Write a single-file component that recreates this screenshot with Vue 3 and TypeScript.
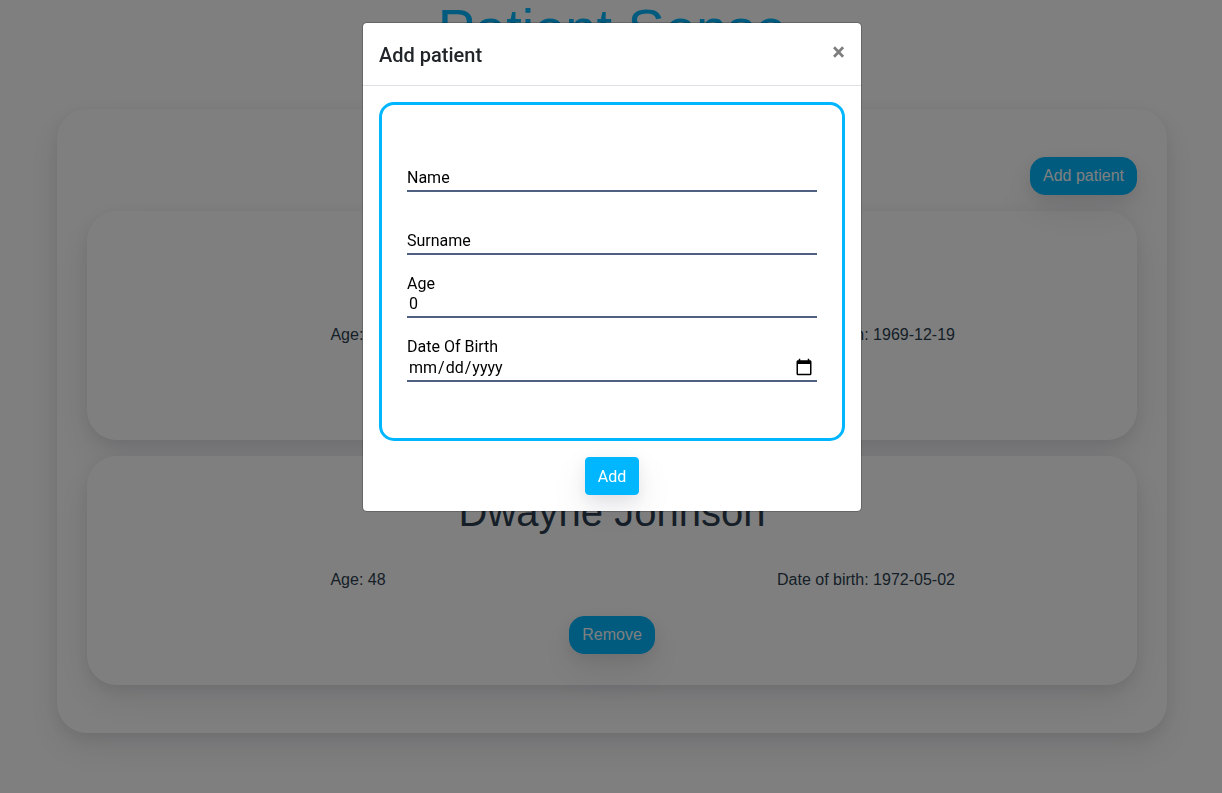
<script setup lang="ts">
import { ref } from 'vue'

interface Patient {
  id: number
  name: string
  age: number
  birth: string
}

const patients = ref<Patient[]>([
  { id: 1, name: 'Richard Hammond', age: 50, birth: '1969-12-19' },
  { id: 2, name: 'Dwayne Johnson', age: 48, birth: '1972-05-02' },
])

const open = ref(true)
const name = ref('')
const surname = ref('')
const age = ref(0)
const birth = ref('')

function remove(id: number) {
  patients.value = patients.value.filter((p) => p.id !== id)
}

function add() {
  patients.value.push({
    id: Date.now(),
    name: `${name.value} ${surname.value}`,
    age: age.value,
    birth: birth.value,
  })
  open.value = false
}
</script>

<template>
  <div class="page">
    <h1 class="brand">Patient Sense</h1>
    <main class="panel">
      <div class="toolbar">
        <button type="button" class="btn pill" @click="open = true">Add patient</button>
      </div>
      <article v-for="p in patients" :key="p.id" class="card">
        <h2 class="card-name">{{ p.name }}</h2>
        <div class="facts">
          <span>Age: {{ p.age }}</span>
          <span>Date of birth: {{ p.birth }}</span>
        </div>
        <button type="button" class="btn pill" @click="remove(p.id)">Remove</button>
      </article>
    </main>
  </div>

  <div v-if="open" class="backdrop">
    <div class="modal" role="dialog" aria-modal="true" aria-labelledby="modal-title">
      <header class="modal-header">
        <h5 id="modal-title" class="modal-title">Add patient</h5>
        <button type="button" class="close" aria-label="Close" @click="open = false">×</button>
      </header>
      <form class="modal-body" @submit.prevent="add">
        <div class="fields">
          <div class="field floating">
            <label for="name">Name</label>
            <input id="name" v-model="name" type="text" />
          </div>
          <div class="field floating">
            <label for="surname">Surname</label>
            <input id="surname" v-model="surname" type="text" />
          </div>
          <div class="field">
            <label for="age">Age</label>
            <input id="age" v-model.number="age" type="number" />
          </div>
          <div class="field">
            <label for="birth">Date Of Birth</label>
            <input id="birth" v-model="birth" class="date" type="date" />
          </div>
        </div>
        <button type="submit" class="btn submit">Add</button>
      </form>
    </div>
  </div>
</template>

<style>
body {
  margin: 0;
  background: #fff;
  overflow: hidden;
}
</style>

<style scoped>
* {
  box-sizing: border-box;
}

.page {
  padding: 0 55px 60px 57px;
  font-family: "Liberation Sans", Arial, sans-serif;
  font-size: 16px;
  line-height: 24px;
  color: #2c3e50;
  text-align: center;
}

.brand {
  margin: 0 0 52px;
  font-size: 56px;
  font-weight: 400;
  line-height: 57px;
  color: #00b7ff;
}

.panel {
  padding: 48px 30px;
  background: #fff;
  border-radius: 30px;
  box-shadow: 0 15px 35px rgba(50, 50, 93, 0.1), 0 5px 15px rgba(0, 0, 0, 0.07);
}

.toolbar {
  height: 38px;
  margin-bottom: 16px;
  text-align: right;
}

.card {
  padding: 32px 17px 31px;
  background: #fff;
  border-radius: 30px;
  box-shadow: 0 15px 35px rgba(50, 50, 93, 0.1), 0 5px 15px rgba(0, 0, 0, 0.07);
}

.card + .card {
  margin-top: 16px;
}

.card-name {
  margin: 0 0 32px;
  font-size: 40px;
  font-weight: 400;
  line-height: 48px;
}

.facts {
  display: grid;
  grid-template-columns: 1fr 1fr;
  margin-bottom: 24px;
}

.btn {
  display: inline-block;
  padding: 6px 12px;
  border: 1px solid #00b7ff;
  border-radius: 4px;
  background: #00b7ff;
  color: #fff;
  font: inherit;
  line-height: 24px;
  vertical-align: top;
  box-shadow: 0 15px 35px rgba(50, 50, 93, 0.1), 0 5px 15px rgba(0, 0, 0, 0.07);
  cursor: pointer;
}

.pill {
  border-radius: 15px;
}

.submit {
  padding: 7px 12px 5px;
}

.backdrop {
  position: fixed;
  inset: 0;
  padding: 22px 0 0 2px;
  overflow: hidden;
  background: rgba(0, 0, 0, 0.5);
}

.modal {
  max-width: 500px;
  margin: 0 auto;
  border: 1px solid rgba(0, 0, 0, 0.2);
  border-radius: 5px;
  background: #fff;
  background-clip: padding-box;
  font-family: Roboto, sans-serif;
  font-size: 16px;
  color: #212529;
}

.modal-header {
  display: flex;
  justify-content: space-between;
  align-items: flex-start;
  padding: 17px 16px 15px;
  border-bottom: 1px solid #dee2e6;
}

.modal-title {
  margin: 0;
  font-size: 20px;
  font-weight: 500;
  line-height: 30px;
}

.close {
  margin: -16px;
  padding: 16px;
  border: 0;
  background: none;
  color: #000;
  font: inherit;
  font-size: 24px;
  font-weight: 700;
  line-height: 24px;
  opacity: 0.5;
  cursor: pointer;
}

.modal-body {
  padding: 16px;
  text-align: center;
}

.fields {
  display: grid;
  gap: 20px;
  margin-bottom: 16px;
  padding: 44px 25px 56px;
  border: 3px solid #00b7ff;
  border-radius: 15px;
  color: #000;
  text-align: left;
}

.field {
  display: grid;
  grid-template-rows: 17px auto;
}

.field label {
  grid-area: 1 / 1;
  line-height: 17px;
}

.field input {
  grid-area: 2 / 1;
  width: 100%;
  height: 26px;
  padding: 0 2px 1px;
  border: 0;
  border-bottom: 2px solid #4f5f82;
  border-radius: 0;
  outline: 0;
  background: transparent;
  color: #000;
  font: inherit;
}

.field .date {
  height: 27px;
  padding: 0 2px 1px 1px;
}

.date::-webkit-calendar-picker-indicator {
  width: 18px;
  height: 18px;
  padding: 2px;
  background: url("data:image/svg+xml,%3Csvg xmlns='http://www.w3.org/2000/svg' viewBox='0 0 24 24'%3E%3Cpath d='M20 3h-1V1h-2v2H7V1H5v2H4c-1.1 0-2 .9-2 2v16c0 1.1.9 2 2 2h16c1.1 0 2-.9 2-2V5c0-1.1-.9-2-2-2zm0 18H4V8h16v13z'/%3E%3C/svg%3E") center / 18px 18px no-repeat;
}

.floating label {
  grid-area: 2 / 1;
  line-height: 23px;
}
</style>
